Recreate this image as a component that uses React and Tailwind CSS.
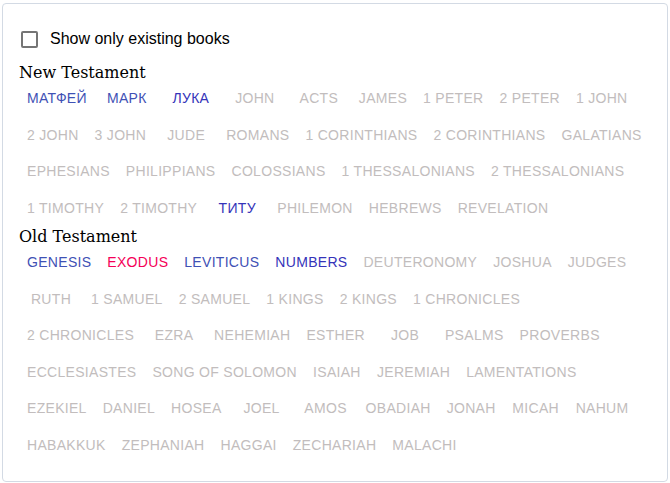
const BLUE = 'text-[#3f51b5]'
const DEEP = 'text-[#3533b9]'
const PINK = 'text-[#f50057]'

// rows as they wrap in the panel
const NEW_TESTAMENT = [
  [['МАТФЕЙ', BLUE], ['МАРК', BLUE], ['ЛУКА', DEEP], ['JOHN'], ['ACTS'], ['JAMES'], ['1 PETER'], ['2 PETER'], ['1 JOHN']],
  [['2 JOHN'], ['3 JOHN'], ['JUDE'], ['ROMANS'], ['1 CORINTHIANS'], ['2 CORINTHIANS'], ['GALATIANS']],
  [['EPHESIANS'], ['PHILIPPIANS'], ['COLOSSIANS'], ['1 THESSALONIANS'], ['2 THESSALONIANS']],
  [['1 TIMOTHY'], ['2 TIMOTHY'], ['ТИТУ', DEEP], ['PHILEMON'], ['HEBREWS'], ['REVELATION']],
]

const OLD_TESTAMENT = [
  [['GENESIS', BLUE], ['EXODUS', PINK], ['LEVITICUS', BLUE], ['NUMBERS', DEEP], ['DEUTERONOMY'], ['JOSHUA'], ['JUDGES']],
  [['RUTH'], ['1 SAMUEL'], ['2 SAMUEL'], ['1 KINGS'], ['2 KINGS'], ['1 CHRONICLES']],
  [['2 CHRONICLES'], ['EZRA'], ['NEHEMIAH'], ['ESTHER'], ['JOB'], ['PSALMS'], ['PROVERBS']],
  [['ECCLESIASTES'], ['SONG OF SOLOMON'], ['ISAIAH'], ['JEREMIAH'], ['LAMENTATIONS']],
  [['EZEKIEL'], ['DANIEL'], ['HOSEA'], ['JOEL'], ['AMOS'], ['OBADIAH'], ['JONAH'], ['MICAH'], ['NAHUM']],
  [['HABAKKUK'], ['ZEPHANIAH'], ['HAGGAI'], ['ZECHARIAH'], ['MALACHI']],
]

function BookList({ title, rows }) {
  return (
    <div>
      <h3 className="pt-[3px] font-['DejaVu_Serif',serif] text-[16px] leading-[15px] text-black whitespace-nowrap">{title}</h3>
      {rows.map((row, i) => (
        <div key={i} className="flex">
          {row.map(([name, color]) => (
            <button
              key={name}
              className={`min-w-[64px] px-2 py-[6px] text-[14px] leading-[24.5px] tracking-[0.3px] uppercase whitespace-nowrap font-['Liberation_Sans',Arial,sans-serif] ${color || 'text-[#c2bdbd]'}`}
            >
              {name}
            </button>
          ))}
        </div>
      ))}
    </div>
  )
}

export default function App() {
  return (
    <div className="px-[2px] pt-[3px] bg-white">
      <div className="border border-[#d3dae4] rounded-[4px] px-4 pt-[12px] pb-[18px]">
        <label className="flex items-center -ml-[11px] h-[46px] font-['Liberation_Sans',Arial,sans-serif] text-[16px] text-black">
          <span className="w-[42px] h-[42px] flex items-center justify-center">
            <span className="w-[17px] h-[17px] border-2 border-[#757575] rounded-[2px]" />
          </span>
          <span>Show only existing books</span>
        </label>
        <BookList title="New Testament" rows={NEW_TESTAMENT} />
        <BookList title="Old Testament" rows={OLD_TESTAMENT} />
      </div>
    </div>
  )
}
